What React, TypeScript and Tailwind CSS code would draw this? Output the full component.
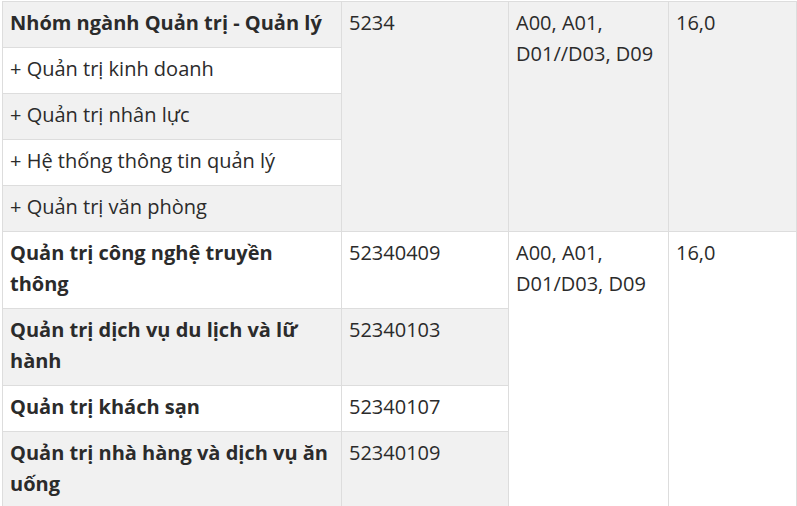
import React from "react";

const td = "border border-[#dddddd] pl-[7px] pr-[8px] pt-[5px] pb-[9px] align-top";

export default function App() {
  return (
    <div className="w-[797px] h-[506px] overflow-hidden bg-white">
      <table
        className="ml-[2px] mt-[1px] border-collapse text-[20px] leading-[31px] text-[#2b2b2b]"
        style={{ fontFamily: '"Open Sans", "Noto Sans", sans-serif', tableLayout: "fixed", width: 794 }}
      >
        <colgroup>
          <col style={{ width: 339 }} />
          <col style={{ width: 167 }} />
          <col style={{ width: 160 }} />
          <col style={{ width: 128 }} />
        </colgroup>
        <tbody>
          <tr className="bg-[#f1f1f1]">
            <td className={`${td} font-bold`}>Nhóm ngành Quản trị - Quản lý</td>
            <td className={td} rowSpan={5}>5234</td>
            <td className={td} rowSpan={5}>A00, A01, D01//D03, D09</td>
            <td className={td} rowSpan={5}>16,0</td>
          </tr>
          <tr className="bg-white">
            <td className={td}>+ Quản trị kinh doanh</td>
          </tr>
          <tr className="bg-[#f1f1f1]">
            <td className={td}>+ Quản trị nhân lực</td>
          </tr>
          <tr className="bg-white">
            <td className={td}>+ Hệ thống thông tin quản lý</td>
          </tr>
          <tr className="bg-[#f1f1f1]">
            <td className={td}>+ Quản trị văn phòng</td>
          </tr>
          <tr className="bg-white">
            <td className={`${td} font-bold`}>Quản trị công nghệ truyền thông</td>
            <td className={td}>52340409</td>
            <td className={td} rowSpan={4}>A00, A01, D01/D03, D09</td>
            <td className={td} rowSpan={4}>16,0</td>
          </tr>
          <tr className="bg-[#f1f1f1]">
            <td className={`${td} font-bold`}>Quản trị dịch vụ du lịch và lữ hành</td>
            <td className={td}>52340103</td>
          </tr>
          <tr className="bg-white">
            <td className={`${td} font-bold`}>Quản trị khách sạn</td>
            <td className={td}>52340107</td>
          </tr>
          <tr className="bg-[#f1f1f1]">
            <td className={`${td} font-bold`}>Quản trị nhà hàng và dịch vụ ăn uống</td>
            <td className={td}>52340109</td>
          </tr>
        </tbody>
      </table>
    </div>
  );
}
